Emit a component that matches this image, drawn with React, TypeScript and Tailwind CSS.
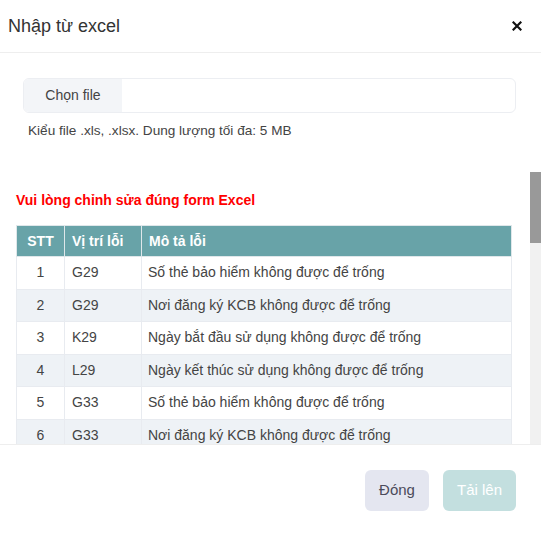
import React from "react";

const rows = [
  { stt: 1, pos: "G29", desc: "Số thẻ bảo hiểm không được để trống" },
  { stt: 2, pos: "G29", desc: "Nơi đăng ký KCB không được để trống" },
  { stt: 3, pos: "K29", desc: "Ngày bắt đầu sử dụng không được để trống" },
  { stt: 4, pos: "L29", desc: "Ngày kết thúc sử dụng không được để trống" },
  { stt: 5, pos: "G33", desc: "Số thẻ bảo hiểm không được để trống" },
  { stt: 6, pos: "G33", desc: "Nơi đăng ký KCB không được để trống" },
];

export default function App() {
  return (
    <div
      className="w-[541px] h-[534px] bg-white flex flex-col overflow-hidden text-[#333]"
      style={{ fontFamily: '"Liberation Sans", Arial, sans-serif' }}
    >
      <div className="h-[53px] shrink-0 border-b border-[#eeeeee] flex items-center justify-between pl-[8px] pr-[19px]">
        <span className="text-[18px] text-[#333]">Nhập từ excel</span>
        <svg width="10" height="10" viewBox="0 0 10 10" className="mb-[1px]">
          <path d="M1.5 1.5 L8.5 8.5 M8.5 1.5 L1.5 8.5" stroke="#111" strokeWidth="2.2" strokeLinecap="square" />
        </svg>
      </div>

      <div className="h-[119px] shrink-0 pt-[25px]">
        <div className="ml-[23px] mr-[25px] h-[35px] border border-[#eceef2] rounded-[6px] flex overflow-hidden">
          <div className="w-[98px] bg-[#f3f5f8] flex items-center justify-center text-[14px] text-[#444]">
            Chọn file
          </div>
          <div className="flex-1" />
        </div>
        <div className="mt-[8px] ml-[28px] text-[13.6px] text-[#444]">
          Kiểu file .xls, .xlsx. Dung lượng tối đa: 5 MB
        </div>
      </div>

      <div className="h-[272px] shrink-0 flex">
        <div className="flex-1 min-w-0 overflow-hidden pl-[16px] pr-[18px] pt-[18px]">
          <div className="text-[14px] leading-[20px] font-bold text-[#ff0000] mb-[15px]">
            Vui lòng chỉnh sửa đúng form Excel
          </div>
          <table className="w-full table-fixed border-collapse text-[14px]">
            <colgroup>
              <col className="w-[48px]" />
              <col className="w-[77px]" />
              <col />
            </colgroup>
            <thead>
              <tr className="h-[31px] bg-[#68a3a8] text-white font-bold">
                <th className="text-center font-bold border border-[#dfe7ea]">STT</th>
                <th className="text-left pl-[7px] font-bold border border-[#dfe7ea]">Vị trí lỗi</th>
                <th className="text-left pl-[7px] font-bold border border-[#dfe7ea]">Mô tả lỗi</th>
              </tr>
            </thead>
            <tbody>
              {rows.map((r, i) => (
                <tr key={r.stt} className={`h-[32.5px] ${i % 2 === 1 ? "bg-[#eef2f6]" : "bg-white"} text-[#444]`}>
                  <td className="text-center border border-[#e8ebf0]">{r.stt}</td>
                  <td className="pl-[7px] border border-[#e8ebf0]">{r.pos}</td>
                  <td className="pl-[6px] border border-[#e8ebf0]">{r.desc}</td>
                </tr>
              ))}
            </tbody>
          </table>
        </div>
        <div className="w-[11px] shrink-0 bg-[#f1f1f1]">
          <div className="h-[71px] bg-[#999999]" />
        </div>
      </div>

      <div className="flex-1 border-t border-[#eeeeee] flex justify-end items-start pt-[25px] pr-[25px] gap-[14px]">
        <button className="w-[64px] h-[41px] rounded-[6px] bg-[#e4e6f0] text-[15px] text-[#4b4b5b]">
          Đóng
        </button>
        <button className="w-[73px] h-[41px] rounded-[6px] bg-[#c3dfdf] text-[15px] text-white">
          Tải lên
        </button>
      </div>
    </div>
  );
}
